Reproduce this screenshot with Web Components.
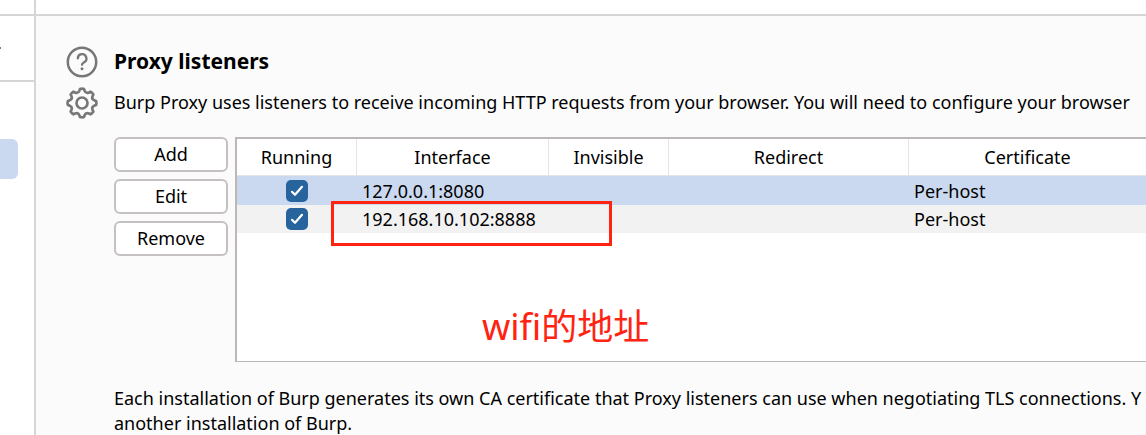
<!DOCTYPE html>
<html lang="en">
<head>
<meta charset="utf-8">
<title>Proxy listeners</title>
<style>
html, body { height: 100%; }
body {
  margin: 0;
  overflow: hidden;
  background: #fff;
  color: #000;
  font: 18px/25px "Noto Sans", "Noto Sans CJK SC", sans-serif;
}
</style>
</head>
<body>
<app-shell>
  <side-nav slot="nav"></side-nav>
  <settings-section>
    <h2 slot="title">Proxy listeners</h2>
    <span slot="intro">Burp Proxy uses listeners to receive incoming HTTP requests from your browser. You will need to configure your browser</span>
    <action-button slot="actions">Add</action-button>
    <action-button slot="actions">Edit</action-button>
    <action-button slot="actions">Remove</action-button>
    <listener-table slot="table"></listener-table>
    <span slot="footer">Each installation of Burp generates its own CA certificate that Proxy listeners can use when negotiating TLS connections. Y<br>another installation of Burp.</span>
  </settings-section>
</app-shell>

<script>
class BaseElement extends HTMLElement {
  constructor() {
    super();
    this.attachShadow({ mode: 'open' }).innerHTML = this.constructor.markup;
  }
}

customElements.define('app-shell', class extends BaseElement {
  static markup = `
    <style>
      :host {
        display: grid; height: 100%;
        grid-template-rows: 16px minmax(0, 1fr);
        grid-template-columns: 34px minmax(0, 1fr);
      }
      .top { box-sizing: border-box; border-bottom: 2px solid #d6d6d6; }
      .top + .top, main { border-left: 2px solid #d6d6d6; }
      main { background: #fbfbfb; overflow: hidden; }
    </style>
    <div class="top"></div><div class="top"></div>
    <slot name="nav"></slot>
    <main><slot></slot></main>`;
});

customElements.define('side-nav', class extends BaseElement {
  static markup = `
    <style>
      :host { display: block; overflow: hidden; }
      .search { height: 64px; border-bottom: 2px solid #d6d6d6; display: flex; align-items: center; }
      .search i { width: 1px; height: 2px; background: #777; }
      .current { width: 18px; height: 40px; margin-top: 57px; border-radius: 0 6px 6px 0; background: #cad9f0; }
    </style>
    <div class="search"><i></i></div>
    <div class="current"></div>`;
});

// Outline of a cog with eight rounded teeth and scooped valleys, centred on 16,16.
function cogPath() {
  const at = (radius, degrees) => {
    const a = degrees * Math.PI / 180;
    return (16 + radius * Math.sin(a)).toFixed(2) + ' ' + (16 - radius * Math.cos(a)).toFixed(2);
  };
  let d = 'M' + at(14.2, -8);
  for (let tooth = 0; tooth < 360; tooth += 45) {
    d += 'Q' + at(14.8, tooth) + ' ' + at(14.2, tooth + 8);
    d += 'L' + at(12.6, tooth + 12);
    d += 'C' + at(11, tooth + 18) + ' ' + at(11, tooth + 27) + ' ' + at(12.6, tooth + 33);
    d += 'L' + at(14.2, tooth + 37);
  }
  return d + 'Z';
}

customElements.define('settings-section', class extends BaseElement {
  static markup = `
    <style>
      :host {
        display: grid;
        grid-template-columns: 32px minmax(0, 1fr);
        column-gap: 16px;
        padding: 30px 0 0 30px;
        white-space: nowrap;
      }
      svg { display: block; width: 32px; height: 32px; fill: none; stroke: #777; stroke-width: 2.7; stroke-linejoin: round; stroke-linecap: round; }
      ::slotted(h2) { margin: 0; font-size: 21px; line-height: 30px; font-weight: 700; }
      .intro { padding-top: 11px; line-height: 26px; }
      .gear { padding-top: 9px; }
      .body { grid-column: 2; display: flex; gap: 7px; padding-top: 18px; }
      .actions { display: flex; flex-direction: column; gap: 7px; width: 114px; flex: none; }
      .table { flex: 1; min-width: 0; }
      .footer { grid-column: 2; padding-top: 24px; }
    </style>
    <svg viewBox="0 0 32 32" role="img" aria-label="Help"><circle cx="16" cy="16" r="14.2" stroke-width="2.5"/><path d="M11.8 12.4a4.300 4.300 0 1 1 6.400 3.800c-1.500.8-2.200 1.400-2.200 2.600" stroke-width="2.300"/><circle cx="16" cy="22.800" r="1.500" fill="#777" stroke="none"/></svg>
    <slot name="title"></slot>
    <div class="gear"><svg viewBox="0 0 32 32" role="img" aria-label="Options"><path d="${cogPath()}"/><circle cx="16" cy="16" r="5.500"/></svg></div>
    <div class="intro"><slot name="intro"></slot></div>
    <div class="body">
      <div class="actions"><slot name="actions"></slot></div>
      <div class="table"><slot name="table"></slot></div>
    </div>
    <div class="footer"><slot name="footer"></slot></div>`;
});

customElements.define('action-button', class extends BaseElement {
  static markup = `
    <style>
      :host { display: block; }
      button {
        display: block; width: 100%; height: 35px; padding: 0;
        border: 2px solid #c6c1c1; border-radius: 6px;
        background: #fff; color: inherit; font: inherit;
      }
    </style>
    <button type="button"><slot></slot></button>`;
});

customElements.define('listener-table', class extends BaseElement {
  static markup = `
    <style>
      :host {
        display: block; box-sizing: border-box; height: 225px; position: relative;
        background: #fff; border: solid #bcb8b8; border-width: 2px 0 1px 2px;
      }
      table { width: 100%; table-layout: fixed; border-collapse: separate; border-spacing: 0; }
      th {
        box-sizing: border-box; height: 37px; padding: 0;
        border-right: 1px solid #e4e4e4; border-bottom: 1px solid #e4e4e4; font-weight: 400;
      }
      th:last-child { border-right: 0; }
      td { height: 28px; padding: 0 0 0 5px; line-height: 28px; }
      td:first-child { padding: 0; }
      tr.selected td { height: 29px; }
      .selected { background: #cad9f0; }
      .striped { background: #f2f2f2; }
      .short { width: 120px; }
      .medium { width: 192px; }
      .long { width: 240px; }
      input {
        appearance: none; display: block; width: 22px; height: 22px; margin: 0 auto;
        border-radius: 5px;
        background: #27649d url("data:image/svg+xml,%3Csvg xmlns='http://www.w3.org/2000/svg' viewBox='0 0 22 22'%3E%3Cpath d='M6 11.800l3 3 7-8' fill='none' stroke='white' stroke-width='2.200' stroke-linecap='round' stroke-linejoin='round'/%3E%3C/svg%3E");
      }
      .frame {
        position: absolute; box-sizing: border-box; left: 94px; top: 62px;
        width: 281px; height: 45px; border: 3px solid #ff2312; pointer-events: none;
      }
      .note {
        position: absolute; left: 245px; top: 166px;
        color: #ff2312; font-size: 36px; line-height: 44px;
      }
    </style>
    <table>
      <colgroup><col class="short"><col class="medium"><col class="short"><col class="long"><col></colgroup>
      <thead><tr><th>Running</th><th>Interface</th><th>Invisible</th><th>Redirect</th><th>Certificate</th></tr></thead>
      <tbody>
        <tr class="selected"><td><input type="checkbox" checked aria-label="Running 127.0.0.1:8080"></td><td>127.0.0.1:8080</td><td></td><td></td><td>Per-host</td></tr>
        <tr class="striped"><td><input type="checkbox" checked aria-label="Running 192.168.10.102:8888"></td><td>192.168.10.102:8888</td><td></td><td></td><td>Per-host</td></tr>
      </tbody>
    </table>
    <div class="frame"></div>
    <div class="note" lang="zh">wifi的地址</div>`;
});
</script>
</body>
</html>
